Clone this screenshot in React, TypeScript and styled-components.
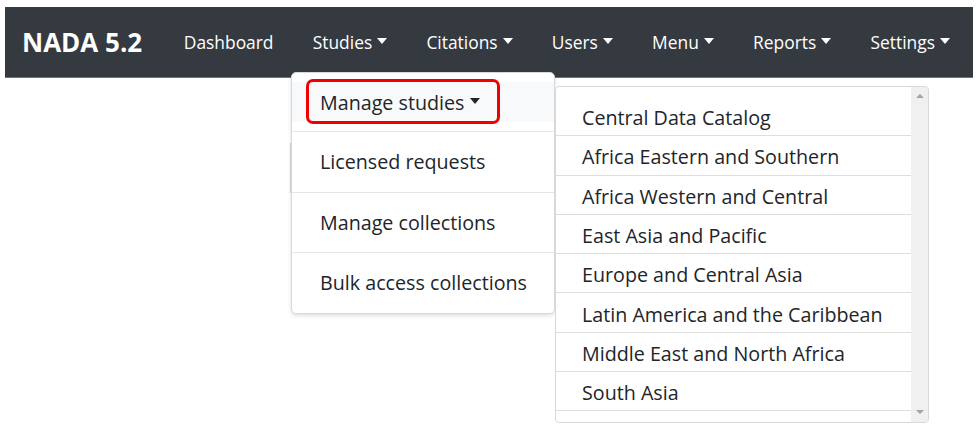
import React from "react";
import styled, { createGlobalStyle } from "styled-components";

const Global = createGlobalStyle`
  html, body { margin: 0; padding: 0; background: #fff; }
  body { font-family: "Open Sans", "Noto Sans", "Liberation Sans", sans-serif; color: #212529; }
  * { box-sizing: border-box; }
`;

const Stage = styled.div`
  position: relative;
  width: 980px;
  height: 430px;
  overflow: hidden;
  padding: 7px 7px 0 5px;
`;

const Navbar = styled.nav`
  display: flex;
  align-items: center;
  height: 71px;
  background: #343a40;
  border-bottom: 1px solid #70757a;
  padding-left: 17px;
`;

const Brand = styled.div`
  color: #fff;
  font-weight: 700;
  font-size: 26px;
  margin-right: 22px;
  white-space: nowrap;
`;

const NavList = styled.div`
  display: flex;
  align-items: center;
`;

const NavLink = styled.div`
  color: #fff;
  font-size: 17.4px;
  padding: 0 19.6px;
  white-space: nowrap;
  display: flex;
  align-items: center;
`;

const Caret = styled.span<{ $dark?: boolean }>`
  display: inline-block;
  margin-left: 5px;
  width: 0;
  height: 0;
  border-top: 6px solid ${(p) => (p.$dark ? "#212529" : "#fff")};
  border-left: 5.5px solid transparent;
  border-right: 5.5px solid transparent;
  margin-top: -2px;
`;

const Menu = styled.div`
  position: absolute;
  left: 291px;
  top: 72px;
  width: 264px;
  background: #fff;
  border: 1px solid #d6d8da;
  border-radius: 5px;
  box-shadow: 0 2px 4px rgba(0, 0, 0, 0.12);
  padding: 9px 0 0;
`;

const MenuItem = styled.div<{ $active?: boolean }>`
  position: relative;
  display: flex;
  align-items: center;
  height: ${(p) => (p.$active ? "40px" : "59.5px")};
  padding-left: 28px;
  font-size: 19.7px;
  color: #212529;
  background: ${(p) => (p.$active ? "#f8f9fa" : "transparent")};
  margin-bottom: ${(p) => (p.$active ? "9px" : "0")};
  white-space: nowrap;
`;

const Divider = styled.div`
  height: 1px;
  background: #e6e6e6;
`;

const Highlight = styled.div`
  position: absolute;
  left: 14px;
  top: -3px;
  width: 194px;
  height: 45px;
  border: 3px solid #f20000;
  border-radius: 7px;
`;

const SubMenu = styled.div`
  position: absolute;
  left: 555px;
  top: 86px;
  width: 374px;
  height: 337px;
  background: #fff;
  border: 1px solid #d6d8da;
  border-radius: 4px;
  display: flex;
  overflow: hidden;
`;

const SubList = styled.div`
  flex: 1;
  padding-top: 10px;
`;

const SubItem = styled.div`
  height: 39.3px;
  display: flex;
  align-items: center;
  padding: 3px 0 0 26px;
  font-size: 19.7px;
  color: #212529;
  border-bottom: 1px solid #dedede;
  white-space: nowrap;
`;

const ScrollTrack = styled.div`
  width: 17px;
  background: #f0f0f0;
  display: flex;
  flex-direction: column;
  justify-content: space-between;
  align-items: center;
  padding: 7px 0 8px;
`;

const Arrow = styled.span<{ $down?: boolean }>`
  width: 0;
  height: 0;
  border-left: 4px solid transparent;
  border-right: 4px solid transparent;
  ${(p) => (p.$down ? "border-top: 4px solid #a3a3a3;" : "border-bottom: 4px solid #a3a3a3;")}
`;

const Ghost = styled.div<{ $x: number; $y: number; $h: number; $c: string }>`
  position: absolute;
  left: ${(p) => p.$x}px;
  top: ${(p) => p.$y}px;
  width: 1px;
  height: ${(p) => p.$h}px;
  background: ${(p) => p.$c};
`;

const navItems = [
  { label: "Dashboard", caret: false },
  { label: "Studies", caret: true },
  { label: "Citations", caret: true },
  { label: "Users", caret: true },
  { label: "Menu", caret: true },
  { label: "Reports", caret: true },
  { label: "Settings", caret: true },
];

const studyItems = ["Licensed requests", "Manage collections", "Bulk access collections"];

const regions = [
  "Central Data Catalog",
  "Africa Eastern and Southern",
  "Africa Western and Central",
  "East Asia and Pacific",
  "Europe and Central Asia",
  "Latin America and the Caribbean",
  "Middle East and North Africa",
  "South Asia",
  "",
];

export default function App() {
  return (
    <>
      <Global />
      <Stage>
        <Navbar>
          <Brand>NADA 5.2</Brand>
          <NavList>
            {navItems.map((n) => (
              <NavLink key={n.label}>
                {n.label}
                {n.caret && <Caret />}
              </NavLink>
            ))}
          </NavList>
        </Navbar>
        <Ghost $x={290} $y={143} $h={50} $c="#d3d5d7" />
        <Ghost $x={554} $y={226} $h={20} $c="#3a3c66" />
        <Menu>
          <MenuItem $active>
            Manage studies
            <Caret $dark style={{ marginLeft: 6 }} />
            <Highlight />
          </MenuItem>
          {studyItems.map((s) => (
            <React.Fragment key={s}>
              <Divider />
              <MenuItem>{s}</MenuItem>
            </React.Fragment>
          ))}
        </Menu>
        <SubMenu>
          <SubList>
            {regions.map((r, i) => (
              <SubItem key={i}>{r}</SubItem>
            ))}
          </SubList>
          <ScrollTrack>
            <Arrow />
            <Arrow $down />
          </ScrollTrack>
        </SubMenu>
      </Stage>
    </>
  );
}
